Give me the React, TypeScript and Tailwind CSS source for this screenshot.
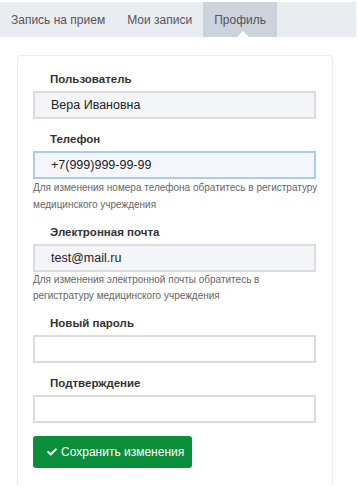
import React from "react";
import { FaCheck } from "react-icons/fa";

const font = { fontFamily: '"Liberation Sans", Arial, sans-serif' };

function Label({ children, className = "" }: { children: React.ReactNode; className?: string }) {
  return (
    <div className={`pl-[17px] text-[11.5px] leading-[16px] font-bold text-[#333] ${className}`}>{children}</div>
  );
}

function Input({ value, variant }: { value?: string; variant: "disabled" | "focus" | "empty" }) {
  const cls =
    variant === "disabled"
      ? "bg-[#f4f5f9] border-[#dcdcdc]"
      : variant === "focus"
      ? "bg-[#f4f6fb] border-[#a9cdef]"
      : "bg-white border-[#dcdcdc]";
  return (
    <div
      className={`mt-1 h-[28px] w-[283px] border-2 ${cls} flex items-center pl-[16px] text-[12.5px] text-[#222]`}
    >
      {value}
    </div>
  );
}

export default function App() {
  return (
    <div className="w-[358px] h-[486px] bg-white overflow-hidden" style={font}>
      <div className="mt-[2px] h-[35px] w-[356px] bg-[#e9ecf0] flex text-[12px] text-[#555]">
        <div className="px-[11px] flex items-center">Запись на прием</div>
        <div className="px-[11px] flex items-center">Мои записи</div>
        <div className="relative w-[74px] bg-[#cdd3dc] flex items-center justify-center">
          Профиль
          <div className="absolute bottom-0 left-[34px] w-0 h-0 border-l-[6px] border-r-[6px] border-b-[6px] border-l-transparent border-r-transparent border-b-white" />
        </div>
      </div>
      <div className="ml-[17px] mt-[18px] w-[316px] h-[430px] border border-b-0 border-[#ececec] rounded-t-[4px] pt-[15px] pl-[15px]">
        <Label>Пользователь</Label>
        <Input value="Вера Ивановна" variant="disabled" />
        <Label className="mt-[12px]">Телефон</Label>
        <Input value="+7(999)999-99-99" variant="focus" />
        <div className="text-[10px] leading-[17px] text-[#666] w-[290px]">
          Для изменения номера телефона обратитесь в регистратуру медицинского учреждения
        </div>
        <Label className="mt-[11px]">Электронная почта</Label>
        <Input value="test@mail.ru" variant="disabled" />
        <div className="text-[10px] leading-[16px] text-[#666] w-[240px]">
          Для изменения электронной почты обратитесь в регистратуру медицинского учреждения
        </div>
        <Label className="mt-[11px]">Новый пароль</Label>
        <Input variant="empty" />
        <Label className="mt-[12px]">Подтверждение</Label>
        <Input variant="empty" />
        <button className="mt-[13px] h-[32px] w-[159px] rounded-[3px] bg-[#0a8e3a] text-white text-[12px] flex items-center pl-[14px] gap-[4px] whitespace-nowrap">
          <FaCheck className="w-[10px] h-[10px]" />
          Сохранить изменения
        </button>
      </div>
    </div>
  );
}
